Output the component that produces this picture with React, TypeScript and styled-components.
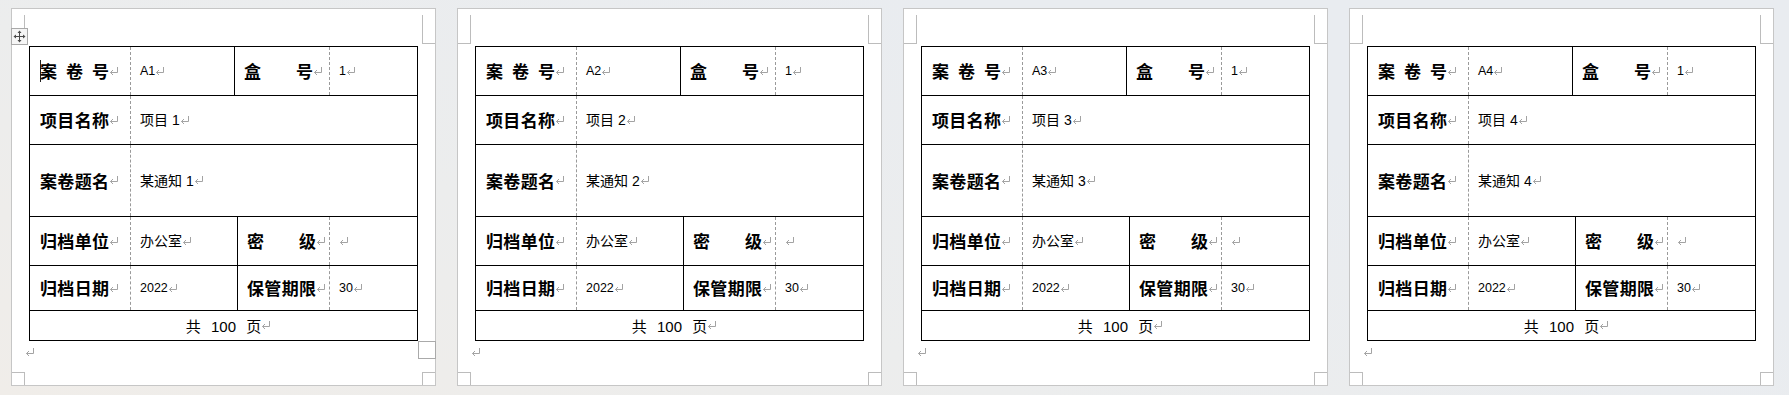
import styled, { createGlobalStyle } from 'styled-components';

const GlobalStyle = createGlobalStyle`
  * {
    box-sizing: border-box;
  }
  html,
  body {
    margin: 0;
    height: 395px;
    overflow: hidden;
  }
  body {
    background: linear-gradient(20deg, #f0ede9 0%, #eceded 35%, #e9ecf0 70%);
    font-family: 'Liberation Sans', 'Noto Sans CJK SC', sans-serif;
    color: #000;
  }
`;

type Edge = 'dash' | 'solid' | 'none';

const pages = [1, 2, 3, 4];

function Pilcrow({ $hang }: { $hang?: boolean }) {
  return (
    <Mark $hang={$hang} width="10" height="8" viewBox="0 0 10 8">
      <path d="M8.5 0 V5.5 H1.5" fill="none" stroke="#a3a3a3" strokeWidth="1" />
      <path d="M4 3 L1.5 5.5 L4 8" fill="none" stroke="#a3a3a3" strokeWidth="1" />
    </Mark>
  );
}

function MoveIcon() {
  return (
    <svg width="13" height="13" viewBox="0 0 13 13">
      <path d="M6.5 2 V11 M2 6.5 H11" stroke="#4a4a4a" strokeWidth="1" />
      <path d="M6.5 0.5 L4.5 3 H8.5 Z M6.5 12.5 L4.5 10 H8.5 Z M0.5 6.5 L3 4.5 V8.5 Z M12.5 6.5 L10 4.5 V8.5 Z" fill="#4a4a4a" />
    </svg>
  );
}

function LabelCell({ text, w, edge = 'none', caret }: { text: string; w: number; edge?: Edge; caret?: boolean }) {
  return (
    <Cell $w={w} $edge={edge}>
      {caret && <Caret />}
      <Label>{text}</Label>
      <Pilcrow />
    </Cell>
  );
}

function ValueCell({ text, w, small }: { text: string; w?: number; small?: boolean }) {
  return (
    <Cell $w={w} $edge="dash">
      <Value $small={small}>{text}</Value>
      <Pilcrow />
    </Cell>
  );
}

function Page({ n, active }: { n: number; active: boolean }) {
  return (
    <Sheet>
      <Corner $pos="tl" />
      <Corner $pos="tr" />
      <Corner $pos="bl" />
      <Corner $pos="br" />
      {active && (
        <MoveHandle>
          <MoveIcon />
        </MoveHandle>
      )}
      <Table>
        <Row $h={48}>
          <LabelCell text="案 卷 号" w={100} caret={active} />
          <ValueCell text={`A${n}`} w={104} small />
          <LabelCell text="盒 号" w={95} edge="solid" />
          <ValueCell text="1" small />
        </Row>
        <Row $h={49}>
          <LabelCell text="项目名称" w={100} />
          <ValueCell text={`项目 ${n}`} />
        </Row>
        <Row $h={72}>
          <LabelCell text="案卷题名" w={100} />
          <ValueCell text={`某通知 ${n}`} />
        </Row>
        <Row $h={49}>
          <LabelCell text="归档单位" w={100} />
          <ValueCell text="办公室" w={107} />
          <LabelCell text="密 级" w={92} edge="solid" />
          <ValueCell text="" />
        </Row>
        <Row $h={45}>
          <LabelCell text="归档日期" w={100} />
          <ValueCell text="2022" w={107} small />
          <LabelCell text="保管期限" w={92} edge="solid" />
          <ValueCell text="30" small />
        </Row>
        <Row $h={30}>
          <Total>
            共 100 页
            <Pilcrow $hang />
          </Total>
        </Row>
        {active && <ResizeHandle />}
      </Table>
      <AfterTable>
        <Pilcrow />
      </AfterTable>
    </Sheet>
  );
}

export default function App() {
  return (
    <>
      <GlobalStyle />
      <Pages>
        {pages.map((n) => (
          <Page key={n} n={n} active={n === 1} />
        ))}
      </Pages>
    </>
  );
}

const Pages = styled.div`
  display: flex;
  gap: 21px;
  padding: 8px 0 0 11px;
`;

const Sheet = styled.div`
  position: relative;
  width: 425px;
  height: 378px;
  background: #fff;
  border: 1px solid #c6c6c6;
  padding-top: 37px;
`;

const Corner = styled.div<{ $pos: 'tl' | 'tr' | 'bl' | 'br' }>`
  position: absolute;
  width: 13px;
  border-color: #bcbcbc;
  border-style: solid;
  border-width: 0;
  ${({ $pos }) =>
    $pos === 'tl'
      ? 'left: 0; top: 6px; height: 29px; border-right-width: 1px; border-bottom-width: 1px;'
      : $pos === 'tr'
        ? 'right: 0; top: 6px; height: 29px; border-left-width: 1px; border-bottom-width: 1px;'
        : $pos === 'bl'
          ? 'left: 0; bottom: 0; height: 13px; border-right-width: 1px; border-top-width: 1px;'
          : 'right: 0; bottom: 0; height: 13px; border-left-width: 1px; border-top-width: 1px;'}
`;

const MoveHandle = styled.div`
  position: absolute;
  left: -1px;
  top: 19px;
  width: 17px;
  height: 17px;
  border: 1px solid #a9a9a9;
  background: #f5f5f5;
  display: flex;
  align-items: center;
  justify-content: center;
`;

const Table = styled.div`
  position: relative;
  margin-left: 17px;
  width: 389px;
  border: 1px solid #000;
  display: flex;
  flex-direction: column;
`;

const Row = styled.div<{ $h: number }>`
  display: flex;
  height: ${(p) => p.$h}px;
  flex-shrink: 0;

  & + & {
    border-top: 1px solid #000;
  }
`;

const Cell = styled.div<{ $w?: number; $edge: Edge }>`
  display: flex;
  align-items: center;
  ${(p) => (p.$w ? `width: ${p.$w}px; flex-shrink: 0;` : 'flex: 1;')}
  padding-left: ${(p) => (p.$edge === 'none' ? 10 : 9)}px;
  border-left: ${(p) =>
    p.$edge === 'dash' ? '1px dashed #9a9a9a' : p.$edge === 'solid' ? '1px solid #000' : 'none'};
`;

const Label = styled.span`
  display: inline-block;
  width: 69px;
  font-family: 'Noto Sans CJK SC', sans-serif;
  font-weight: 700;
  font-size: 17px;
  line-height: 22px;
  text-align: justify;
  text-align-last: justify;
  white-space: nowrap;
`;

const Value = styled.span<{ $small?: boolean }>`
  font-size: ${(p) => (p.$small ? 12.5 : 14)}px;
  line-height: 20px;
  white-space: pre;
`;

const Mark = styled.svg<{ $hang?: boolean }>`
  flex-shrink: 0;
  margin-top: -1px;
  margin-right: ${(p) => (p.$hang ? '-10px' : '0')};
  vertical-align: middle;
`;

const Caret = styled.span`
  display: inline-block;
  width: 1px;
  height: 22px;
  margin-right: -1px;
  background: #222;
`;

const Total = styled.div`
  flex: 1;
  display: flex;
  align-items: center;
  justify-content: center;
  font-size: 15px;
  word-spacing: 6px;
  white-space: pre;
`;

const ResizeHandle = styled.div`
  position: absolute;
  left: calc(100% + 1px);
  top: calc(100% + 1px);
  width: 18px;
  height: 18px;
  border: 1px solid #aaaaaa;
  background: #fff;
`;

const AfterTable = styled.div`
  display: flex;
  margin: 8px 0 0 13px;
`;
